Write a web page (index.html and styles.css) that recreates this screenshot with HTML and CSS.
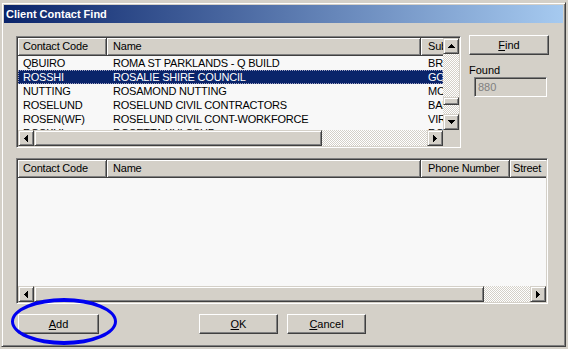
FILE: index.html
```html
<!DOCTYPE html>
<html>
<head>
<meta charset="utf-8">
<title>Client Contact Find</title>
<link rel="stylesheet" href="styles.css">
</head>
<body>
<div class="window">
  <div class="titlebar">Client Contact Find</div>
  <div class="client">
    <div class="toprow">
      <div class="list list-top">
        <div class="lv-content">
          <div class="hdr">
            <div class="hc c1">Contact Code</div>
            <div class="hc c2">Name</div>
            <div class="hc c3 wide">Suburb</div>
          </div>
          <div class="row"><span class="c1">QBUIRO</span><span class="c2">ROMA ST PARKLANDS - Q BUILD</span><span class="c3 wide">BR</span></div>
          <div class="row sel"><span class="c1">ROSSHI</span><span class="c2">ROSALIE SHIRE COUNCIL</span><span class="c3 wide">GO</span></div>
          <div class="row"><span class="c1">NUTTING</span><span class="c2">ROSAMOND NUTTING</span><span class="c3 wide">MC</span></div>
          <div class="row"><span class="c1">ROSELUND</span><span class="c2">ROSELUND CIVIL CONTRACTORS</span><span class="c3 wide">BAL</span></div>
          <div class="row"><span class="c1">ROSEN(WF)</span><span class="c2">ROSELUND CIVIL CONT-WORKFORCE</span><span class="c3 wide">VIR</span></div>
          <div class="row"><span class="c1">ROSKUL</span><span class="c2">ROSETTA KULSSUP</span><span class="c3 wide">RO</span></div>
        </div>
        <div class="vscroll">
          <div class="sb"><svg class="arr" width="7" height="4" viewBox="0 0 7 4"><path d="M3 0h1v1h-1zM2 1h3v1h-3zM1 2h5v1h-5zM0 3h7v1h-7z"/></svg></div>
          <div class="vtrack"><div class="vthumb"></div></div>
          <div class="sb"><svg class="arr" width="7" height="4" viewBox="0 0 7 4"><path d="M0 0h7v1h-7zM1 1h5v1h-5zM2 2h3v1h-3zM3 3h1v1h-1z"/></svg></div>
        </div>
        <div class="hscroll">
          <div class="sb"><svg class="arr" width="4" height="7" viewBox="0 0 4 7"><path d="M0 3h1v1h-1zM1 2h1v3h-1zM2 1h1v5h-1zM3 0h1v7h-1z"/></svg></div>
          <div class="hthumb top-thumb"></div>
          <div class="htrack"></div>
          <div class="sb"><svg class="arr" width="4" height="7" viewBox="0 0 4 7"><path d="M0 0h1v7h-1zM1 1h1v5h-1zM2 2h1v3h-1zM3 3h1v1h-1z"/></svg></div>
        </div>
        <div class="corner"></div>
      </div>
      <div class="side">
        <button class="btn find"><u>F</u>ind</button>
        <div class="lbl">Found</div>
        <div class="tb">880</div>
      </div>
    </div>

    <div class="list list-bottom">
      <div class="lv-content">
        <div class="hdr">
          <div class="hc c1">Contact Code</div>
          <div class="hc c2">Name</div>
          <div class="hc c3">Phone Number</div>
          <div class="hc c4">Street</div>
        </div>
      </div>
      <div class="hscroll">
        <div class="sb"><svg class="arr" width="4" height="7" viewBox="0 0 4 7"><path d="M0 3h1v1h-1zM1 2h1v3h-1zM2 1h1v5h-1zM3 0h1v7h-1z"/></svg></div>
        <div class="hthumb bottom-thumb"></div>
        <div class="htrack"></div>
        <div class="sb"><svg class="arr" width="4" height="7" viewBox="0 0 4 7"><path d="M0 0h1v7h-1zM1 1h1v5h-1zM2 2h1v3h-1zM3 3h1v1h-1z"/></svg></div>
      </div>
    </div>

    <div class="buttons">
      <button class="btn add"><u>A</u>dd</button>
      <button class="btn ok"><u>O</u>K</button>
      <button class="btn cancel"><u>C</u>ancel</button>
    </div>
  </div>
  <div class="circle"></div>
</div>
</body>
</html>
```

FILE: styles.css
```css
* { box-sizing: border-box; }
html, body { margin: 0; padding: 0; }
body {
  width: 568px;
  height: 349px;
  overflow: hidden;
  background: #d4d0c8;
  font-family: "Liberation Sans", Arial, sans-serif;
  font-size: 11px;
  color: #000;
}
.window {
  position: relative;
  margin: 2px 0 0 1px;
  width: 565px;
  height: 345px;
  background: #d4d0c8;
  border: 1px solid;
  border-color: #d4d0c8 #404040 #404040 #d4d0c8;
  box-shadow: inset 1px 1px #fff, inset -1px -1px #808080;
  padding: 2px;
}
.titlebar {
  height: 18px;
  line-height: 18px;
  padding-left: 2px;
  color: #fff;
  font-weight: bold;
  font-size: 11px;
  background: linear-gradient(to right, #0a246a, #a6caf0);
  white-space: nowrap;
}
.client { padding: 13px 0 0 12px; }
.toprow { display: flex; align-items: flex-start; }

.list {
  border: 1px solid;
  border-color: #808080 #fff #fff #808080;
  box-shadow: inset 1px 1px #404040, inset -1px -1px #d4d0c8;
  padding: 1px;
  background: #f8f8f8;
  display: grid;
}
.list-top {
  width: 445px;
  height: 112px;
  grid-template-columns: 1fr 16px;
  grid-template-rows: 1fr 16px;
}
.list-bottom {
  margin-top: 10px;
  width: 532px;
  height: 146px;
  grid-template-columns: 1fr;
  grid-template-rows: 1fr 16px;
}
.lv-content {
  overflow: hidden;
  background: #f8f8f8;
  min-width: 0;
}
.hdr {
  display: flex;
  height: 18px;
  white-space: nowrap;
}
.hc {
  flex: none;
  height: 18px;
  line-height: 17px;
  background: #d4d0c8;
  border-right: 1px solid #404040;
  border-bottom: 1px solid #404040;
  box-shadow: inset 1px 1px #fff, inset -1px -1px #808080;
  overflow: hidden;
  letter-spacing: -0.2px;
}
.c1 { width: 89px; padding-left: 5px; }
.c2 { width: 314px; padding-left: 6px; }
.c3 { width: 89px; padding-left: 7px; }
.c4 { width: 80px; padding-left: 3px; }
.c3.wide { width: 100px; }

.row {
  display: flex;
  height: 14px;
  line-height: 14px;
  white-space: nowrap;
  letter-spacing: -0.2px;
}
.row:first-of-type { margin-top: 0; }
.hdr + .row { margin-top: 0; }
.row span { flex: none; overflow: hidden; }
.row.sel {
  background: #0a246a;
  color: #fff;
  outline: 1px dotted #a0a0c0;
  outline-offset: -1px;
}

.sb, .vthumb, .hthumb {
  background: #d4d0c8;
  border: 1px solid;
  border-color: #d4d0c8 #404040 #404040 #d4d0c8;
  box-shadow: inset 1px 1px #fff, inset -1px -1px #808080;
}
.sb {
  flex: none;
  width: 16px;
  height: 16px;
  display: flex;
  align-items: center;
  justify-content: center;
}
.arr { display: block; fill: #000; shape-rendering: crispEdges; }

.vscroll {
  display: flex;
  flex-direction: column;
}
.vtrack {
  flex: 1;
  background: repeating-conic-gradient(#fff 0 25%, #d4d0c8 0 50%) 0 0 / 2px 2px;
}
.vthumb {
  margin-top: 43px;
  height: 8px;
  width: 16px;
}
.hscroll {
  display: flex;
  min-width: 0;
}
.hthumb { flex: none; height: 16px; }
.top-thumb { width: 288px; }
.bottom-thumb { width: 450px; }
.htrack {
  flex: 1;
  background: repeating-conic-gradient(#fff 0 25%, #d4d0c8 0 50%) 0 0 / 2px 2px;
}
.corner { background: #d4d0c8; }

.side {
  margin: -1px 0 0 8px;
  display: flex;
  flex-direction: column;
  align-items: flex-start;
}
.btn {
  margin: 0;
  padding: 0;
  font: inherit;
  color: #000;
  background: #d4d0c8;
  border: 1px solid;
  border-color: #fff #404040 #404040 #fff;
  box-shadow: inset -1px -1px #808080;
  height: 20px;
  line-height: 17px;
  text-align: center;
}
.btn u { text-decoration-thickness: 1px; text-underline-offset: 1px; }
.find { width: 80px; }
.lbl {
  margin-top: 9px;
  height: 13px;
  line-height: 13px;
}
.tb {
  margin-left: 5px;
  width: 73px;
  height: 20px;
  border: 1px solid;
  border-color: #808080 #fff #fff #808080;
  box-shadow: inset 1px 1px #404040, inset -1px -1px #d4d0c8;
  background: #d4d0c8;
  color: #808080;
  line-height: 18px;
  padding-left: 3px;
}

.buttons {
  display: flex;
  margin-top: 10px;
}
.add { margin-left: 2px; width: 81px; }
.ok { margin-left: 100px; width: 79px; }
.cancel { margin-left: 9px; width: 79px; }

.circle {
  position: absolute;
  left: 9px;
  top: 295px;
  width: 106px;
  height: 47px;
  border-style: solid;
  border-color: #0000f0;
  border-width: 4px 3px;
  border-radius: 50%;
  pointer-events: none;
}
```
